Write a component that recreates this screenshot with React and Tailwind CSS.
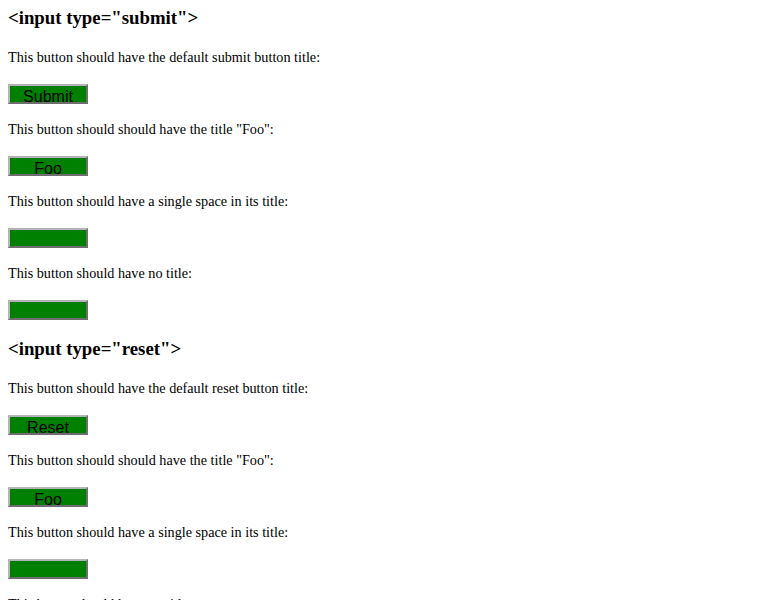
import React from 'react';

const sections = [
  {
    type: 'submit',
    items: [
      { text: 'This button should have the default submit button title:', label: 'Submit' },
      { text: 'This button should should have the title "Foo":', label: 'Foo' },
      { text: 'This button should have a single space in its title:', label: ' ' },
      { text: 'This button should have no title:', label: '' },
    ],
  },
  {
    type: 'reset',
    items: [
      { text: 'This button should have the default reset button title:', label: 'Reset' },
      { text: 'This button should should have the title "Foo":', label: 'Foo' },
      { text: 'This button should have a single space in its title:', label: ' ' },
      { text: 'This button should have no title:', label: '' },
    ],
  },
];

function GreenButton({ label }) {
  return (
    <div className="w-[80px] h-[20px] overflow-hidden bg-[#008000] border-2 border-t-[#b4b4b4] border-l-[#b4b4b4] border-b-[#6e6e6e] border-r-[#6e6e6e] pt-[2px] text-center text-[16px] leading-[18px] text-black font-['Liberation_Sans',Arial,sans-serif] whitespace-pre">
      {label}
    </div>
  );
}

function App() {
  return (
    <div className="bg-white h-[600px] overflow-hidden px-[8px] pt-[7px] font-['Liberation_Serif','Times_New_Roman',serif] text-black">
      {sections.map((section, si) => (
        <div key={section.type} className={si > 0 ? 'mt-[18px]' : ''}>
          <h2 className="h-[22px] leading-[22px] text-[18.8px] font-bold">
            {'<input type="' + section.type + '">'}
          </h2>
          {section.items.map((item, i) => (
            <div key={i} className={i === 0 ? 'mt-[20px]' : 'mt-[17px]'}>
              <p className="h-[16px] leading-[16px] text-[14.2px] whitespace-nowrap">{item.text}</p>
              <div className="mt-[19px]">
                <GreenButton label={item.label} />
              </div>
            </div>
          ))}
        </div>
      ))}
    </div>
  );
}

export default App;
